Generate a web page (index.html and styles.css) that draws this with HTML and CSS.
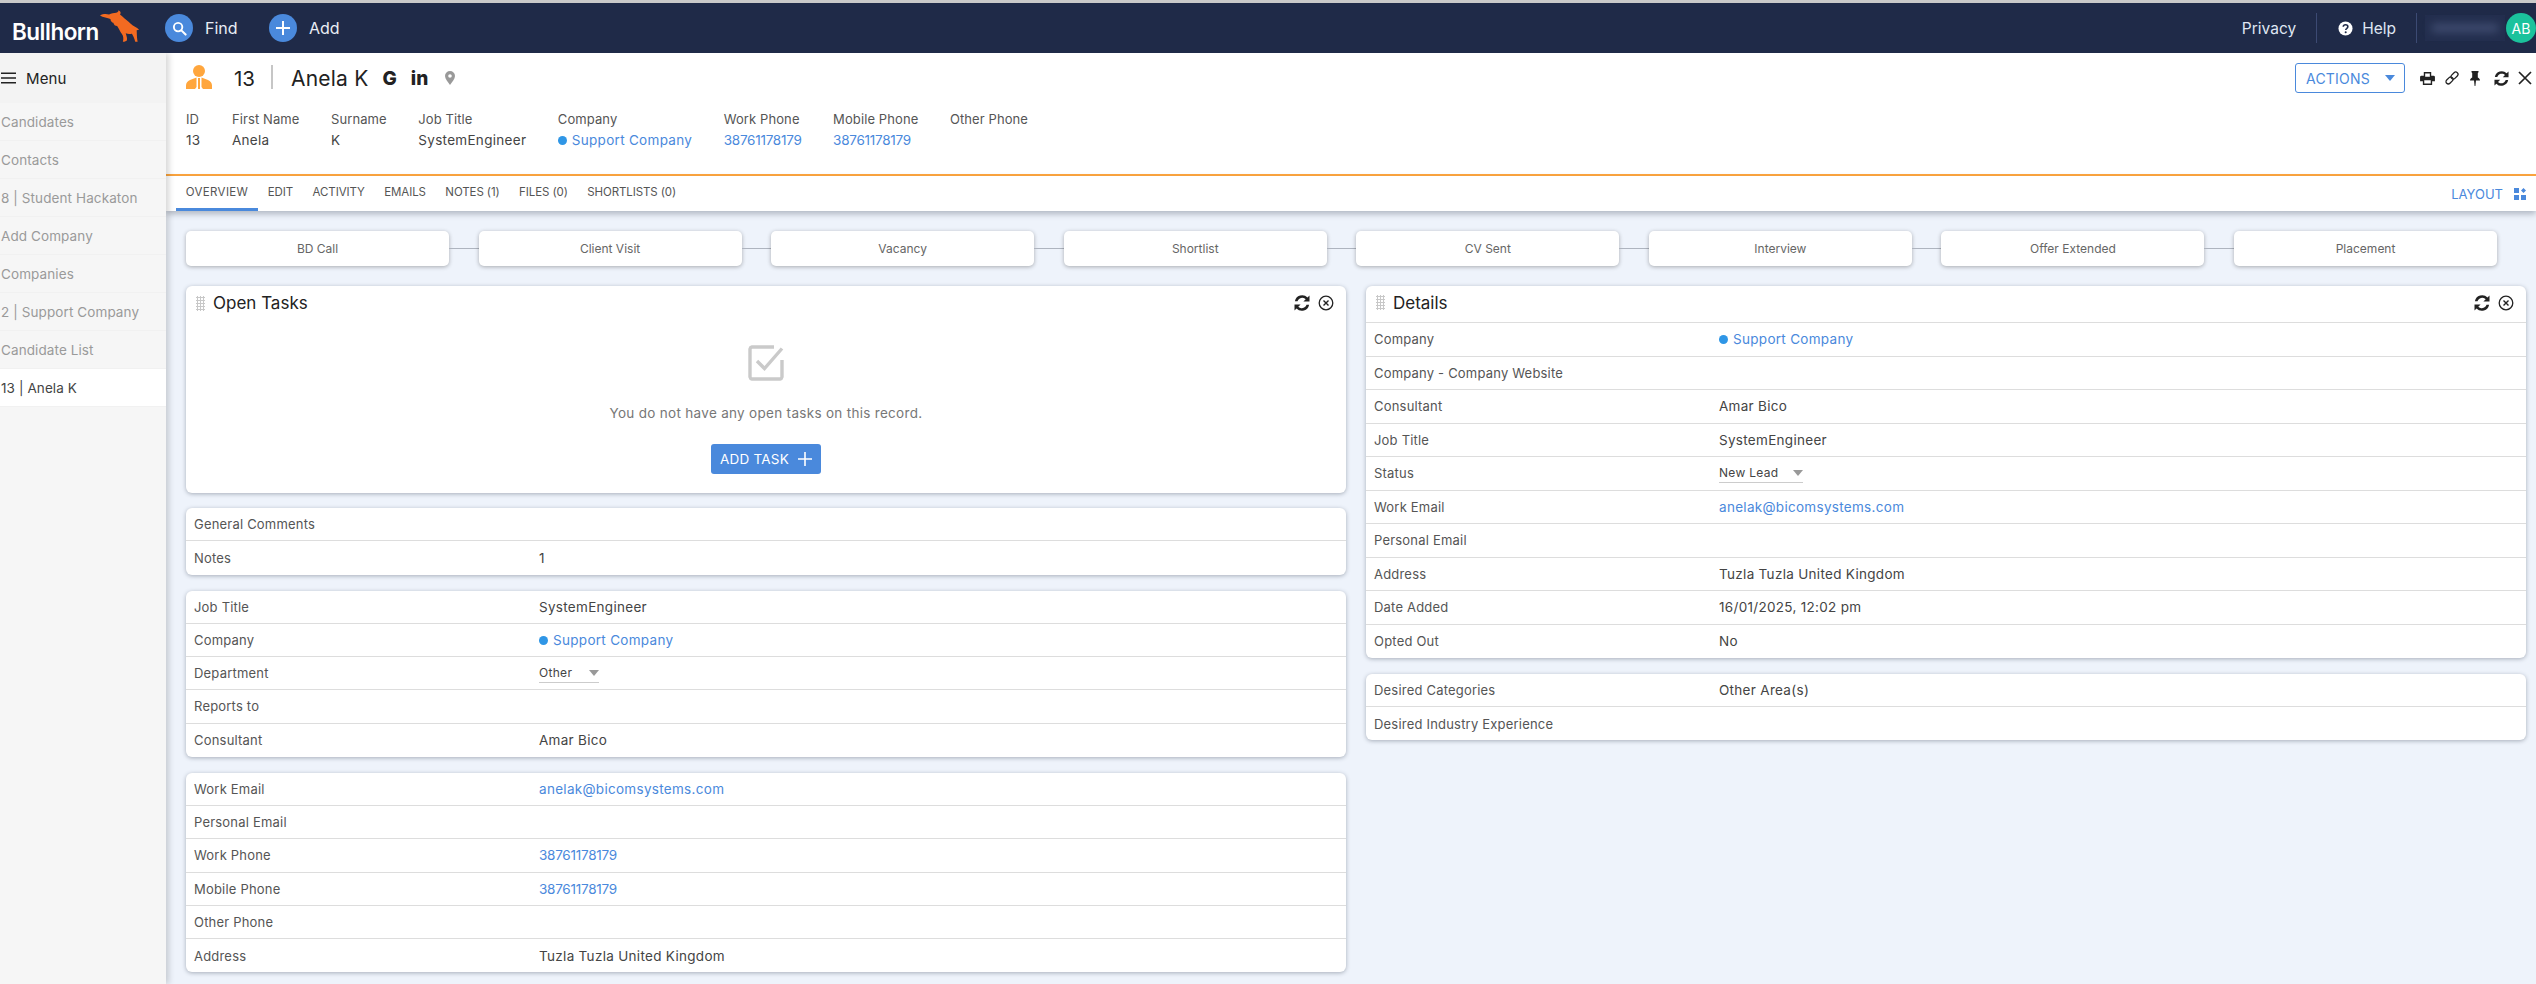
FILE: index.html
```html
<!DOCTYPE html>
<html lang="en">
<head>
<meta charset="utf-8">
<title>Bullhorn</title>
<link rel="stylesheet" href="styles.css">
</head>
<body>
<svg class="defs" width="0" height="0">
  <symbol id="sync" viewBox="0 0 16 16"><path fill="#222" d="M13.500 2.500A7.400 7.400 0 0 0 .9 6.300h2.600a4.900 4.900 0 0 1 8.200-2L9.400 6.600H15.500V.5zM2.500 13.500A7.400 7.400 0 0 0 15.100 9.700h-2.600a4.900 4.900 0 0 1-8.200 2l2.300-2.300H.5V15.500z"/></symbol>
  <symbol id="xcircle" viewBox="0 0 16 16"><circle cx="8" cy="8" r="6.800" fill="none" stroke="#222" stroke-width="1.300"/><path d="M5.500 5.500l5 5M10.500 5.500l-5 5" stroke="#222" stroke-width="1.400"/></symbol>
</svg>
<header class="topbar">
  <div class="brand">
    <span class="brand-name">Bullhorn</span>
    <svg class="bull" viewBox="0 0 42 34"><path fill="#f26a21" d="M0 5.500C3 3.500 7 3.500 9.500 4.500 12 3 14.500 3 17 2.500 19 2 20 1 19 0c2.500.8 3.500 2.500 2 4.500 3 2.500 6 5.500 9 7.500 3 3 6 5 9 6.500l2 2-2.500.5c.3 3 0 6 1 12H37c-1-4-2-6-3.500-8.500-2.500.5-4.500.5-6.500-.5 1 3 2 6 1 8l-2.500 1H24c1-3 .5-6-1-8-2-3-3.500-6-5-8.500-2 0-3.500-1.500-4-3.500-1.500 0-3-2-3-4C8 8 3 7.500 0 5.500z"/></svg>
  </div>
  <a class="nav-action">
    <span class="nav-circle"><svg viewBox="0 0 16 16" class="nav-glyph"><circle cx="6.500" cy="6.500" r="4.500" fill="none" stroke="#fff" stroke-width="2"/><path d="M10 10l4.500 4.500" stroke="#fff" stroke-width="2.200" stroke-linecap="round"/></svg></span>
    <span>Find</span>
  </a>
  <a class="nav-action add">
    <span class="nav-circle"><svg viewBox="0 0 16 16" class="nav-glyph plus"><path d="M8 1v14M1 8h14" stroke="#fff" stroke-width="2"/></svg></span>
    <span>Add</span>
  </a>
  <div class="nav-right">
    <span class="privacy">Privacy</span>
    <span class="nav-sep"></span>
    <span class="help"><svg viewBox="0 0 16 16" class="help-icon"><circle cx="8" cy="8" r="7.500" fill="#fff"/><path d="M5.600 6.200C5.700 4.800 6.700 4 8 4c1.400 0 2.500.8 2.500 2.100 0 1-.6 1.500-1.300 2-.6.400-.9.700-.9 1.400" fill="none" stroke="#1f2a48" stroke-width="1.700"/><circle cx="8.200" cy="11.900" r="1.100" fill="#1f2a48"/></svg>Help</span>
    <span class="nav-sep"></span>
    <span class="blurred"><span class="blur-bar"></span></span>
    <span class="avatar">AB</span>
  </div>
</header>

<div class="shell">
  <nav class="sidebar">
    <div class="menu-head">
      <svg viewBox="0 0 16 12" class="burger"><path d="M0 1h16M0 6h16M0 11h16" stroke="#222" stroke-width="1.600"/></svg>
      <span>Menu</span>
    </div>
    <a class="menu-item">Candidates</a>
    <a class="menu-item">Contacts</a>
    <a class="menu-item">8 | Student Hackaton</a>
    <a class="menu-item">Add Company</a>
    <a class="menu-item">Companies</a>
    <a class="menu-item">2 | Support Company</a>
    <a class="menu-item">Candidate List</a>
    <a class="menu-item active">13 | Anela K</a>
  </nav>

  <main class="record">
    <section class="rec-head">
      <div class="title-row">
        <svg viewBox="0 0 26 24" class="person"><circle cx="13" cy="6" r="6" fill="#ffa63d"/><path fill="#ffa63d" d="M0 24v-3.500c0-2.500 1.500-4.500 4-5.500l6.500-2.500V22l-1.500 2zM26 24v-3.500c0-2.500-1.500-4.500-4-5.500l-6.500-2.500V22l1.500 2zM12 13h2v11h-2z"/></svg>
        <span class="rec-id">13</span>
        <span class="title-sep"></span>
        <span class="rec-name">Anela K</span>
        <span class="rec-g">G</span>
        <span class="rec-in">in</span>
        <svg viewBox="0 0 10 14" class="rec-pin"><path fill="#999" fill-rule="evenodd" d="M5 0a5 5 0 0 1 5 5c0 3-3 6-5 9C3 11 0 8 0 5a5 5 0 0 1 5-5zm0 3.200a1.800 1.800 0 1 0 0 3.600 1.800 1.800 0 0 0 0-3.600z"/></svg>
        <div class="title-actions">
          <button class="actions-btn">ACTIONS<span class="caret-blue"></span></button>
          <svg viewBox="0 0 16 14" class="tool print"><path fill="#222" fill-rule="evenodd" d="M4 0h8v4h2.500A1.500 1.500 0 0 1 16 5.500V10h-3v4H3v-4H0V5.500A1.500 1.500 0 0 1 1.500 4H4zm1.500 1.500V5h5V1.500zM4.500 9v3.500h7V9z"/></svg>
          <svg viewBox="0 0 14 14" class="tool link"><g fill="none" stroke="#222" stroke-width="1.300" transform="rotate(-45 7 7)"><rect x="-.5" y="4.700" width="8" height="4.600" rx="2.300"/><rect x="6.500" y="4.700" width="8" height="4.600" rx="2.300"/></g></svg>
          <svg viewBox="0 0 10 15" class="tool pin"><path fill="#222" d="M1.500 0h7v1.300L7.800 2v4.500C9 7.200 10 8.300 10 9.500H6l-.6 5.500h-.8L4 9.500H0c0-1.200 1-2.300 2.200-3V2l-.7-.7z"/></svg>
          <svg viewBox="0 0 16 16" class="tool refresh"><use href="#sync"/></svg>
          <svg viewBox="0 0 14 14" class="tool close"><path d="M1 1l12 12M13 1L1 13" stroke="#222" stroke-width="1.700"/></svg>
        </div>
      </div>
      <div class="summary">
        <div class="sum-col"><span class="sum-k">ID</span><span>13</span></div>
        <div class="sum-col"><span class="sum-k">First Name</span><span>Anela</span></div>
        <div class="sum-col"><span class="sum-k">Surname</span><span>K</span></div>
        <div class="sum-col"><span class="sum-k">Job Title</span><span>SystemEngineer</span></div>
        <div class="sum-col"><span class="sum-k">Company</span><a class="link-text"><i class="dot"></i>Support Company</a></div>
        <div class="sum-col"><span class="sum-k">Work Phone</span><a class="link-text phone">38761178179</a></div>
        <div class="sum-col"><span class="sum-k">Mobile Phone</span><a class="link-text phone">38761178179</a></div>
        <div class="sum-col"><span class="sum-k">Other Phone</span><span></span></div>
      </div>
    </section>

    <div class="tabs">
      <a class="tab active">OVERVIEW</a>
      <a class="tab">EDIT</a>
      <a class="tab">ACTIVITY</a>
      <a class="tab">EMAILS</a>
      <a class="tab">NOTES (1)</a>
      <a class="tab">FILES (0)</a>
      <a class="tab">SHORTLISTS (0)</a>
      <a class="layout">LAYOUT
        <svg viewBox="0 0 12 12" class="layout-icon"><path fill="#4a89dc" d="M0 0h5v5H0zM0 7h5v5H0zM7 7h5v5H7zM9.500 0L12 2.500 9.500 5 7 2.500z"/></svg>
      </a>
    </div>

    <div class="content">
      <div class="stages">
        <div class="stage">BD Call</div><i class="stage-line"></i>
        <div class="stage">Client Visit</div><i class="stage-line"></i>
        <div class="stage">Vacancy</div><i class="stage-line"></i>
        <div class="stage">Shortlist</div><i class="stage-line"></i>
        <div class="stage">CV Sent</div><i class="stage-line"></i>
        <div class="stage">Interview</div><i class="stage-line"></i>
        <div class="stage">Offer Extended</div><i class="stage-line"></i>
        <div class="stage">Placement</div>
      </div>

      <div class="columns">
        <div class="col col-left">
          <section class="card tasks">
            <div class="card-title bare">
              <span class="drag"></span><h2>Open Tasks</h2>
              <span class="card-tools">
                <svg viewBox="0 0 16 16" class="c-icon"><use href="#sync"/></svg>
                <svg viewBox="0 0 16 16" class="c-icon"><use href="#xcircle"/></svg>
              </span>
            </div>
            <div class="tasks-body">
              <svg viewBox="0 0 36 36" class="check"><path d="M26 2H4a2.500 2.500 0 0 0-2 2v28a2.500 2.500 0 0 0 2 2h28a2.500 2.500 0 0 0 2-2V15" fill="none" stroke="#cacaca" stroke-width="3.400"/><path d="M9 16l7.500 7.500L34 3.500" fill="none" stroke="#cacaca" stroke-width="3.400"/></svg>
              <p>You do not have any open tasks on this record.</p>
              <button class="add-task">ADD TASK<svg viewBox="0 0 14 14" class="add-plus"><path d="M7 0v14M0 7h14" stroke="#fff" stroke-width="1.600"/></svg></button>
            </div>
          </section>

          <section class="card">
            <div class="row"><span class="k">General Comments</span><span class="v"></span></div>
            <div class="row"><span class="k">Notes</span><span class="v">1</span></div>
          </section>

          <section class="card">
            <div class="row"><span class="k">Job Title</span><span class="v">SystemEngineer</span></div>
            <div class="row"><span class="k">Company</span><a class="v link-text"><i class="dot"></i>Support Company</a></div>
            <div class="row"><span class="k">Department</span><span class="v"><span class="select dept">Other<i class="caret"></i></span></span></div>
            <div class="row"><span class="k">Reports to</span><span class="v"></span></div>
            <div class="row"><span class="k">Consultant</span><span class="v">Amar Bico</span></div>
          </section>

          <section class="card">
            <div class="row"><span class="k">Work Email</span><a class="v link-text">anelak@bicomsystems.com</a></div>
            <div class="row"><span class="k">Personal Email</span><span class="v"></span></div>
            <div class="row"><span class="k">Work Phone</span><a class="v link-text phone">38761178179</a></div>
            <div class="row"><span class="k">Mobile Phone</span><a class="v link-text phone">38761178179</a></div>
            <div class="row"><span class="k">Other Phone</span><span class="v"></span></div>
            <div class="row"><span class="k">Address</span><span class="v">Tuzla Tuzla United Kingdom</span></div>
          </section>
        </div>

        <div class="col">
          <section class="card">
            <div class="card-title">
              <span class="drag"></span><h2>Details</h2>
              <span class="card-tools">
                <svg viewBox="0 0 16 16" class="c-icon"><use href="#sync"/></svg>
                <svg viewBox="0 0 16 16" class="c-icon"><use href="#xcircle"/></svg>
              </span>
            </div>
            <div class="row"><span class="k">Company</span><a class="v link-text"><i class="dot"></i>Support Company</a></div>
            <div class="row"><span class="k">Company - Company Website</span><span class="v"></span></div>
            <div class="row"><span class="k">Consultant</span><span class="v">Amar Bico</span></div>
            <div class="row"><span class="k">Job Title</span><span class="v">SystemEngineer</span></div>
            <div class="row"><span class="k">Status</span><span class="v"><span class="select status">New Lead<i class="caret"></i></span></span></div>
            <div class="row"><span class="k">Work Email</span><a class="v link-text">anelak@bicomsystems.com</a></div>
            <div class="row"><span class="k">Personal Email</span><span class="v"></span></div>
            <div class="row"><span class="k">Address</span><span class="v">Tuzla Tuzla United Kingdom</span></div>
            <div class="row"><span class="k">Date Added</span><span class="v">16/01/2025, 12:02 pm</span></div>
            <div class="row"><span class="k">Opted Out</span><span class="v">No</span></div>
          </section>
          <section class="card">
            <div class="row"><span class="k">Desired Categories</span><span class="v">Other Area(s)</span></div>
            <div class="row"><span class="k">Desired Industry Experience</span><span class="v"></span></div>
          </section>
        </div>
      </div>
    </div>
  </main>
</div>
</body>
</html>
```

FILE: styles.css
```css
* { box-sizing: border-box; }
html { height: 984px; overflow: hidden; }
body {
  margin: 0;
  padding: 0;
  height: 984px;
  overflow: hidden;
  background: #eef3fb;
  font-family: Inter, "Noto Sans", "Liberation Sans", sans-serif;
  font-size: 13px;
  color: #444;
  border-top: 3px solid #c9c9c9;
}
h2, p { margin: 0; font-weight: 400; }
a { text-decoration: none; }
button { font-family: inherit; cursor: pointer; }
.defs { position: absolute; top: 0; left: 0; }

.topbar {
  height: 50px;
  background: #1f2a48;
  color: #fff;
  display: flex;
  align-items: center;
  font-size: 16px;
}
.brand { width: 165px; padding-left: 12px; display: flex; align-items: center; flex: none; }
.brand-name { font-size: 22.500px; font-weight: 600; letter-spacing: -.5px; margin-top: 7px; }
.bull { width: 40px; height: 33px; margin-left: 1px; margin-top: -4px; }
.nav-action { display: flex; align-items: center; gap: 12px; width: 104px; color: #e9edf5; }
.nav-circle { width: 28px; height: 28px; border-radius: 50%; background: #4a89dc; display: flex; align-items: center; justify-content: center; }
.nav-glyph { width: 15px; height: 15px; }
.nav-glyph.plus { width: 16px; height: 16px; }
.nav-right { margin-left: auto; display: flex; align-items: center; height: 100%; }
.privacy { color: #dfe6f3; margin-right: 20px; font-size: 15.500px; }
.nav-sep { width: 1px; height: 30px; background: #3c4a73; }
.help { display: flex; align-items: center; gap: 9px; margin: 0 20px 0 21px; color: #dfe6f3; font-size: 15.500px; }
.help-icon { width: 15px; height: 15px; }
.blurred { width: 80px; height: 26px; margin-left: 8px; margin-right: 1px; display: flex; align-items: center; justify-content: center; background: #232e4e; }
.blur-bar { width: 66px; height: 8px; background: #414e72; filter: blur(4px); }
.avatar { width: 30px; height: 30px; border-radius: 50%; background: #1bc29c; display: flex; align-items: center; justify-content: center; font-size: 14px; }

.shell { display: flex; height: 931px; overflow: hidden; }
.sidebar { width: 166px; flex: none; background: #f6f6f6; box-shadow: 3px 0 6px rgba(0,0,0,.16); position: relative; z-index: 2; font-size: 13.500px; letter-spacing: .1px; }
.menu-head { height: 50px; background: #f3f3f3; display: flex; align-items: center; gap: 10px; padding-left: 1px; color: #222; font-size: 15px; }
.burger { width: 15px; height: 12px; }
.menu-item { display: flex; align-items: center; height: 38px; padding-left: 1px; color: #9a9a9a; border-bottom: 1px solid #f1f1f1; }
.menu-item.active { background: #fff; color: #444; }

.record { flex: 1; min-width: 0; }
.rec-head { height: 123px; background: #fff; border-bottom: 2px solid #ffa63d; padding-left: 20px; }
.title-row { display: flex; align-items: center; height: 50px; color: #222; }
.person { width: 26px; height: 24px; margin-top: -2px; }
.rec-id { font-size: 20.500px; margin-left: 22px; }
.title-sep { width: 2px; height: 24px; background: #c6c6c6; margin: -3px 18px 0 16px; }
.rec-name { font-size: 21px; letter-spacing: .2px; }
.rec-g { font-size: 19px; font-weight: 800; margin-left: 14px; }
.rec-in { font-size: 19px; font-weight: 800; margin-left: 14px; }
.rec-pin { width: 10px; height: 14px; margin-left: 17px; }
.title-actions { margin-left: auto; display: flex; align-items: center; height: 100%; }
.actions-btn { width: 110px; height: 30px; background: #fff; border: 1px solid #4a89dc; border-radius: 3px; color: #4a89dc; font-size: 14px; letter-spacing: .2px; display: flex; align-items: center; padding: 0 0 0 10px; margin-right: 15px; }
.caret-blue { border: 5px solid transparent; border-top: 6px solid #4a89dc; border-bottom: 0; margin-left: 15px; }
.tool { flex: none; }
.print { width: 15px; height: 13px; margin-right: 10px; }
.link { width: 14px; height: 14px; margin-right: 11px; }
.pin { width: 10px; height: 15px; margin-right: 14px; }
.refresh { width: 15px; height: 15px; margin-right: 9px; }
.close { width: 14px; height: 14px; margin-right: 4px; }

.summary { display: flex; padding-top: 9px; color: #444; font-size: 13.500px; letter-spacing: .3px; }
.sum-col { display: flex; flex-direction: column; gap: 6px; line-height: 15px; margin-right: 31.500px; }
.sum-k { color: #555; font-size: 13px; letter-spacing: .1px; }
.link-text { color: #4a89dc; }
.dot { display: inline-block; width: 9px; height: 9px; border-radius: 50%; background: #2f96e6; margin-right: 5px; }

.tabs { height: 35px; background: #fff; display: flex; align-items: center; padding: 0 10px; box-shadow: 0 3px 6px rgba(60,70,90,.35); position: relative; font-size: 11.500px; }
.tab { height: 100%; display: flex; align-items: center; padding: 0 9.750px; color: #555; border-bottom: 3px solid transparent; letter-spacing: -.1px; }
.tab.active { border-bottom-color: #4a89dc; letter-spacing: .35px; }
.layout { margin-left: auto; display: flex; align-items: center; gap: 11px; color: #4a89dc; font-size: 13px; }
.layout-icon { width: 12px; height: 12px; }

.content { padding: 20px 10px 0 20px; }
.stages { display: flex; align-items: center; width: 2311px; height: 35px; margin-bottom: 20px; }
.stage { width: 263px; flex: none; height: 35px; background: #fff; border-radius: 5px; box-shadow: 0 1px 4px rgba(0,0,0,.3); display: flex; align-items: center; justify-content: center; font-size: 12px; color: #666; }
.stage-line { flex: 1; height: 1px; background: #aeb4bf; }

.columns { display: grid; grid-template-columns: 1160px 1160px; column-gap: 20px; align-items: start; }
.col { display: flex; flex-direction: column; gap: 16px; }
.card { background: #fff; border-radius: 6px; box-shadow: 0 1px 4px rgba(50,60,80,.38); }
.card.tasks { height: 207px; margin-bottom: -1px; }
.card-title { height: 37px; display: flex; align-items: center; padding: 0 12px 3px 10px; border-bottom: 1px solid #ddd; color: #222; }
.card-title.bare { border-bottom: 0; }
.card-title h2 { font-size: 17px; }
.drag { width: 9px; height: 15px; margin-right: 8px; background-image: radial-gradient(#c8c8c8 1px, transparent 1.100px); background-size: 3px 3px; }
.card-tools { margin-left: auto; display: flex; gap: 8px; }
.c-icon { width: 16px; height: 16px; }

.tasks-body { display: flex; flex-direction: column; align-items: center; padding-top: 22px; }
.check { width: 36px; height: 36px; }
.tasks-body p { color: #777; font-size: 13.500px; letter-spacing: .3px; line-height: 20px; margin-top: 22px; }
.add-task { width: 110px; height: 30px; background: #4a89dc; border: 0; border-radius: 3px; color: #fff; font-size: 13.500px; letter-spacing: .2px; margin-top: 21px; display: flex; align-items: center; justify-content: center; gap: 9px; padding: 0; }
.add-plus { width: 14px; height: 14px; }

.row { display: flex; align-items: center; height: 33.500px; padding-left: 8px; border-bottom: 1px solid #ddd; }
.row:last-child { border-bottom: 0; height: 33px; }
.col-left .row { height: 33.250px; }
.col-left .row:last-child { height: 33.250px; }
.k { width: 345px; flex: none; color: #555; letter-spacing: .2px; }
.v { color: #444; font-size: 13.500px; letter-spacing: .3px; }
.v.link-text { color: #4a89dc; }
.link-text.phone { letter-spacing: -.25px; }
.select { display: inline-flex; align-items: center; justify-content: space-between; height: 20px; border-bottom: 1px solid #ccc; font-size: 12px; }
.select.dept { width: 60px; }
.select.status { width: 84px; }
.caret { border: 5px solid transparent; border-top: 6px solid #999; border-bottom: 0; }
```
